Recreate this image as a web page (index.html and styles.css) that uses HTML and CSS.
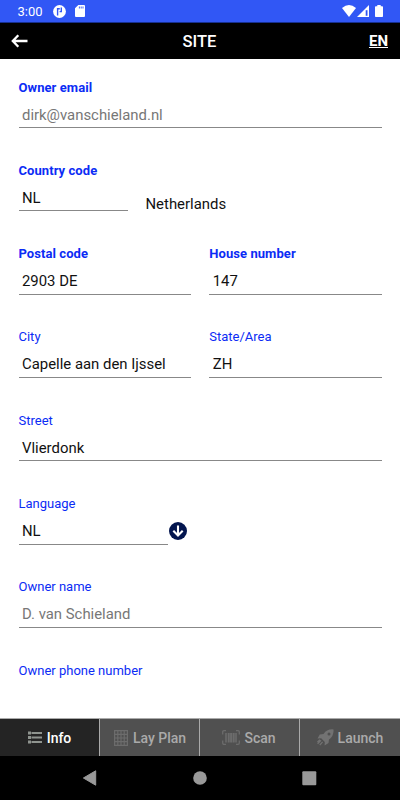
FILE: index.html
```html
<!DOCTYPE html>
<html lang="en">
<head>
    <meta charset="UTF-8">
    <meta name="viewport" content="width=device-width, initial-scale=1.0">
    <title>Site</title>
    <link rel="stylesheet" href="styles.css">
</head>
<body>
    <div class="status-bar">
        <span class="time">3:00</span>
        <svg class="app-icon" width="13" height="13" viewBox="0 0 13 13">
            <circle cx="6.5" cy="6.5" r="6.4" fill="#fff"/>
            <path d="M4.600 10.500V3.800h2.200M8.300 2.600v4H6.600" fill="none" stroke="#3157f5" stroke-width="1.400"/>
        </svg>
        <svg class="sd-icon" width="10" height="12" viewBox="0 0 10 12">
            <path d="M3.3 0H9a1 1 0 0 1 1 1v10a1 1 0 0 1-1 1H1a1 1 0 0 1-1-1V3.3z" fill="#fff"/>
            <path d="M4.400 1.500v2M6.200 1.500v2M8 1.500v2" stroke="#3157f5" stroke-width=".9"/>
        </svg>
        <div class="status-right">
            <svg width="14" height="12" viewBox="0 0 14 12">
                <path d="M7 12L0 3Q7-3 14 3z" fill="#fff"/>
            </svg>
            <svg width="12" height="12" viewBox="0 0 12 12">
                <path d="M0 12L12 0v12z" fill="#fff"/>
                <path d="M8.7 5.2h1.8v5.6H8.7z" fill="#3157f5"/>
            </svg>
            <svg class="battery" width="8" height="12" viewBox="0 0 8 12">
                <path d="M2.3 0h3.4v1.2H7.2q.8 0 .8.8v9.2q0 .8-.8.8H.8Q0 12 0 11.200V2q0-.8.8-.8h1.500z" fill="#fff"/>
            </svg>
        </div>
    </div>

    <header class="header">
        <svg class="back" width="17" height="14" viewBox="0 0 17 14">
            <path d="M7.300 1.300L1.800 7l5.500 5.700M2 7h14.500" fill="none" stroke="#fff" stroke-width="2.300"/>
        </svg>
        <h1>SITE</h1>
        <a class="lang" href="#">EN</a>
    </header>

    <main class="form">
        <div class="row">
            <div class="field">
                <div class="label required">Owner email</div>
                <div class="value disabled">dirk@vanschieland.nl</div>
            </div>
        </div>
        <div class="row">
            <div class="field country">
                <div class="label required">Country code</div>
                <div class="value">NL</div>
            </div>
            <div class="country-name">Netherlands</div>
        </div>
        <div class="row">
            <div class="field">
                <div class="label required">Postal code</div>
                <div class="value">2903 DE</div>
            </div>
            <div class="field">
                <div class="label required">House number</div>
                <div class="value">147</div>
            </div>
        </div>
        <div class="row">
            <div class="field">
                <div class="label">City</div>
                <div class="value">Capelle aan den Ijssel</div>
            </div>
            <div class="field">
                <div class="label">State/Area</div>
                <div class="value">ZH</div>
            </div>
        </div>
        <div class="row">
            <div class="field">
                <div class="label">Street</div>
                <div class="value">Vlierdonk</div>
            </div>
        </div>
        <div class="row language-row">
            <div class="field language">
                <div class="label">Language</div>
                <div class="value">NL</div>
            </div>
            <svg class="dropdown" width="18" height="18" viewBox="0 0 18 18">
                <circle cx="9" cy="9" r="9" fill="#04164f"/>
                <path d="M9 3.400v10M4.300 8.700L9 13.400l4.700-4.700" fill="none" stroke="#fff" stroke-width="2.100"/>
            </svg>
        </div>
        <div class="row">
            <div class="field">
                <div class="label">Owner name</div>
                <div class="value disabled">D. van Schieland</div>
            </div>
        </div>
        <div class="row">
            <div class="field">
                <div class="label">Owner phone number</div>
            </div>
        </div>
    </main>

    <nav class="tabs">
        <div class="tab active">
            <svg width="14" height="13" viewBox="0 0 14 13">
                <path d="M3.500 2H14M3.500 6.500H14M3.500 11H14" stroke="#8f948f" stroke-width="1.900"/>
                <path d="M0 2h3M0 6.500h3M0 11h3" stroke="#8f948f" stroke-width="2.800"/>
            </svg>
            <span>Info</span>
        </div>
        <div class="tab plan">
            <svg width="14" height="16" viewBox="0 0 14 16">
                <path d="M.6.600h12.800v14.800H.6zM3.800.6v14.800M7 .6v14.800M10.200.6v14.800M.6 4.300h12.800M.6 8h12.800M.6 11.700h12.800" fill="none" stroke="#6c6c6c" stroke-width="1.200"/>
            </svg>
            <span>Lay Plan</span>
        </div>
        <div class="tab scan">
            <svg width="18" height="15" viewBox="0 0 18 15">
                <path d="M4 .7H2Q.7.700.7 2v2.500M14 .7h2q1.300 0 1.300 1.300v2.500M4 14.300H2Q.7 14.300.7 13v-2.500M14 14.300h2q1.300 0 1.300-1.300v-2.500" fill="none" stroke="#6c6c6c" stroke-width="1.300"/>
                <path d="M4 3v9.500M14 3v9.500" stroke="#6c6c6c" stroke-width="1.500"/>
                <path d="M6.700 3v9.500M11.700 3v9.500" stroke="#6c6c6c" stroke-width="2"/>
                <path d="M9.200 3v9.500" stroke="#6c6c6c" stroke-width="2.200"/>
            </svg>
            <span>Scan</span>
        </div>
        <div class="tab launch">
            <svg width="17" height="17" viewBox="0 0 17 17">
                <path d="M16.500.4Q10-.2 6.500 5L2.800 5.600.5 9.500l3.700-.2 3.600 3.600-.2 3.600 3.900-2.400.5-3.600Q17.100 7 16.500.4z" fill="#727272"/>
                <path d="M4 11.400L.6 14.800M5.600 12.900L2.800 16.200M3 10.800L.4 12.900" stroke="#727272" stroke-width="1.300"/>
                <circle cx="12" cy="5" r="1.500" fill="#505050"/>
            </svg>
            <span>Launch</span>
        </div>
    </nav>

    <div class="android-nav">
        <svg width="14" height="16" viewBox="0 0 14 16">
            <path d="M12.700.8v14.400L.4 8z" fill="#999" stroke="#999" stroke-linejoin="round"/>
        </svg>
        <svg width="14" height="14" viewBox="0 0 14 14">
            <circle cx="7" cy="7" r="6.800" fill="#999"/>
        </svg>
        <svg width="15" height="15" viewBox="0 0 15 15">
            <rect x=".3" y=".2" width="14" height="14" rx="1" fill="#999"/>
        </svg>
    </div>
</body>
</html>
```
FILE: styles.css
```css
* {
    box-sizing: border-box;
}
body {
    font-family: Roboto, sans-serif;
    margin: 0;
    height: 800px;
    display: flex;
    flex-direction: column;
    background-color: #fff;
    color: #111;
    overflow: hidden;
}
svg {
    display: block;
    flex: none;
}
.status-bar {
    height: 23px;
    flex: none;
    display: flex;
    align-items: center;
    padding: 0 17px;
    background-color: #3157f5;
    border-bottom: 1px solid #17308f;
    color: #fff;
}
.time {
    width: 36px;
    padding-left: 0.5px;
    font-size: 13px;
}
.sd-icon {
    margin-left: 9px;
}
.status-right {
    margin-left: auto;
    display: flex;
    gap: 1px;
}
.battery {
    margin-left: 5px;
}
.header {
    height: 36px;
    flex: none;
    display: grid;
    grid-template-columns: 1fr auto 1fr;
    align-items: center;
    padding: 0 12px 0 11px;
    background-color: #000;
    color: #fff;
}
h1 {
    margin: 0;
    font-size: 16.5px;
    font-weight: 500;
}
.lang {
    justify-self: end;
    color: #fff;
    font-size: 15px;
    font-weight: 700;
}
.form {
    flex: 1;
    min-height: 0;
    padding: 19.5px 18px 0 18.5px;
    overflow: hidden;
}
.row {
    display: flex;
    gap: 18px;
    height: 83.33px;
}
.field {
    flex: 1;
}
.label {
    height: 17px;
    line-height: 17px;
    font-size: 13px;
    color: #0b2cf5;
    white-space: nowrap;
}
.required {
    font-weight: 700;
    letter-spacing: 0.07px;
}
.value {
    height: 32.5px;
    padding: 6px 3.5px 0;
    line-height: 26px;
    font-size: 14.9px;
    border-bottom: 1px solid #888;
    white-space: nowrap;
}
.disabled {
    color: #777;
}
.country {
    flex: 0 0 109px;
}
.country-name {
    padding-top: 29px;
    line-height: 26px;
    font-size: 14.9px;
}
.language-row {
    gap: 1px;
}
.language {
    flex: 0 0 149px;
}
.dropdown {
    margin-top: 26.5px;
}
.tabs {
    height: 38px;
    flex: none;
    display: grid;
    grid-template-columns: repeat(4, 1fr);
    border-top: 1px solid #aaa;
    background-color: #505050;
}
.tab {
    display: flex;
    align-items: center;
    justify-content: center;
    gap: 5px;
    border-right: 1px solid #aaa;
    color: #aaa;
    font-size: 14px;
    font-weight: 500;
}
.tab:last-child {
    border-right: none;
}
.plan {
    padding-left: 1px;
}
.scan {
    gap: 4px;
    padding-right: 1px;
}
.launch {
    gap: 4px;
}
.active {
    background-color: #242424;
    color: #fff;
}
.android-nav {
    height: 44px;
    flex: none;
    display: flex;
    align-items: center;
    justify-content: space-between;
    padding: 0 83px;
    background-color: #000;
}
```
